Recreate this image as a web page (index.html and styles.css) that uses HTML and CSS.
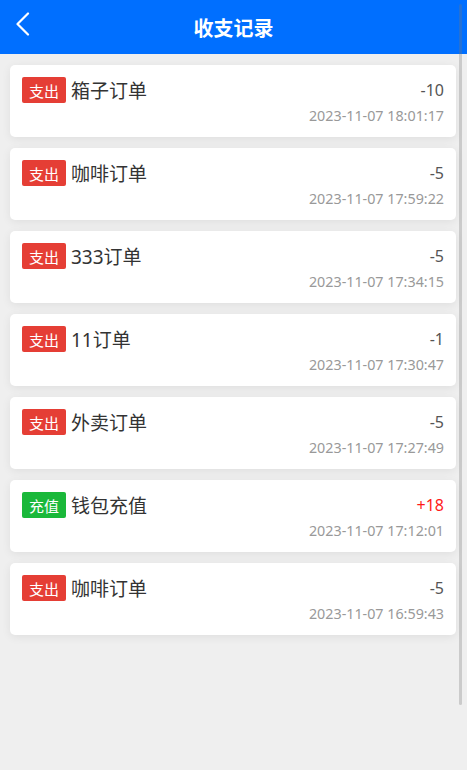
FILE: index.html
```html
<!DOCTYPE html>
<html lang="zh-CN">
<head>
    <meta charset="UTF-8">
    <meta name="viewport" content="width=device-width, initial-scale=1.0">
    <title>收支记录</title>
    <link rel="stylesheet" href="styles.css">
</head>
<body>
    <div class="header">
        <span class="back">
            <svg width="14" height="24" viewBox="0 0 14 24">
                <polyline points="12,1.5 1.5,12 12,22.5" fill="none" stroke="#fff" stroke-width="2.2" stroke-linecap="round" stroke-linejoin="round"/>
            </svg>
        </span>
        <h1>收支记录</h1>
    </div>

    <div class="list">
        <div class="card">
            <div class="row">
                <span class="tag out">支出</span>
                <span class="name">箱子订单</span>
                <span class="amount">-10</span>
            </div>
            <div class="time">2023-11-07 18:01:17</div>
        </div>
        <div class="card">
            <div class="row">
                <span class="tag out">支出</span>
                <span class="name">咖啡订单</span>
                <span class="amount">-5</span>
            </div>
            <div class="time">2023-11-07 17:59:22</div>
        </div>
        <div class="card">
            <div class="row">
                <span class="tag out">支出</span>
                <span class="name">333订单</span>
                <span class="amount">-5</span>
            </div>
            <div class="time">2023-11-07 17:34:15</div>
        </div>
        <div class="card">
            <div class="row">
                <span class="tag out">支出</span>
                <span class="name">11订单</span>
                <span class="amount">-1</span>
            </div>
            <div class="time">2023-11-07 17:30:47</div>
        </div>
        <div class="card">
            <div class="row">
                <span class="tag out">支出</span>
                <span class="name">外卖订单</span>
                <span class="amount">-5</span>
            </div>
            <div class="time">2023-11-07 17:27:49</div>
        </div>
        <div class="card">
            <div class="row">
                <span class="tag in">充值</span>
                <span class="name">钱包充值</span>
                <span class="amount plus">+18</span>
            </div>
            <div class="time">2023-11-07 17:12:01</div>
        </div>
        <div class="card">
            <div class="row">
                <span class="tag out">支出</span>
                <span class="name">咖啡订单</span>
                <span class="amount">-5</span>
            </div>
            <div class="time">2023-11-07 16:59:43</div>
        </div>
    </div>

    <div class="scrollbar"></div>
</body>
</html>
```

FILE: styles.css
```css
body {
    font-family: "Noto Sans", "Noto Sans CJK SC", sans-serif;
    background-color: #efefef;
    margin: 0;
    padding: 0;
    min-height: 770px;
}

.header {
    height: 54px;
    background-color: #006fff;
    display: flex;
    align-items: center;
    justify-content: center;
    position: relative;
}

.header h1 {
    margin: 0;
    color: #fff;
    font-size: 20px;
    font-weight: bold;
    font-family: "Noto Sans CJK SC", sans-serif;
}

.back {
    position: absolute;
    left: 16px;
    top: 12px;
    display: flex;
}

.list {
    padding: 11px 11px 0 10px;
    display: flex;
    flex-direction: column;
    gap: 11px;
}

.card {
    background-color: #fff;
    border-radius: 5px;
    box-shadow: 0 2px 10px rgba(0, 0, 0, 0.07);
    padding: 12px 12px 10px 12px;
    height: 50px;
}

.row {
    display: flex;
    align-items: center;
    height: 26px;
}

.tag {
    width: 44px;
    height: 26px;
    border-radius: 2px;
    color: #fff;
    font-size: 15px;
    font-family: "Noto Sans CJK SC", sans-serif;
    display: flex;
    align-items: center;
    justify-content: center;
    margin-right: 5px;
}

.tag.out {
    background-color: #e53e35;
}

.tag.in {
    background-color: #1ab83a;
}

.name {
    flex: 1;
    font-size: 19px;
    color: #333;
}

.amount {
    font-size: 16px;
    color: #555;
}

.amount.plus {
    color: #ff1a1a;
}

.time {
    margin-top: 3px;
    line-height: 20px;
    text-align: right;
    font-size: 14.3px;
    color: #999;
}

.scrollbar {
    position: fixed;
    left: 459px;
    top: 4px;
    width: 3px;
    height: 701px;
    border-radius: 2px;
    background-color: rgba(120, 120, 120, 0.3);
}
```
